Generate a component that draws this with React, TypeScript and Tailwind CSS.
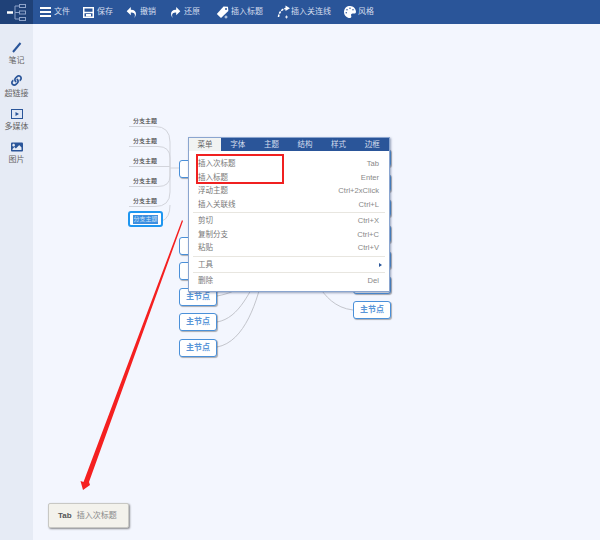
import { ReactNode } from 'react';
import { FaPalette, FaLink, FaImage } from 'react-icons/fa';
import { ImUndo2, ImRedo2 } from 'react-icons/im';

const cjk = "font-['Liberation_Sans','Noto_Sans_CJK_SC',sans-serif]";

function LogoIcon() {
  return (
    <svg width="20" height="19" viewBox="0 0 20 19" fill="none" stroke="#8ea3c9">
      <path d="M0 9.5h6" stroke="#fff" strokeWidth="2.5" />
      <path d="M8 9.5 H12 M8 9.5 V3 H12 M8 9.5 V16 H12" strokeWidth="1" />
      <rect x="12.5" y="1.5" width="6" height="3" />
      <rect x="12.5" y="8" width="6" height="3" />
      <rect x="12.5" y="14.5" width="6" height="3" />
    </svg>
  );
}

function MenuIcon() {
  return (
    <svg width="11" height="10" viewBox="0 0 11 10" fill="#fff">
      <rect width="11" height="2" />
      <rect y="4" width="11" height="2" />
      <rect y="8" width="11" height="2" />
    </svg>
  );
}

function SaveIcon() {
  return (
    <svg width="11" height="11" viewBox="0 0 11 11" fill="none" stroke="#fff">
      <rect x="0.75" y="0.75" width="9.5" height="9.5" strokeWidth="1.5" />
      <path d="M1 5.5h9" strokeWidth="1.5" />
      <rect x="3" y="7" width="5" height="2.5" fill="#fff" stroke="none" />
    </svg>
  );
}

function TagIcon() {
  return (
    <svg width="13" height="13" viewBox="0 0 13 13">
      <path d="M7.5 0.5 L12 0.8 L12.3 5 L5 12 L0.8 8 Z" fill="#fff" />
      <circle cx="10" cy="3" r="1" fill="#2a5599" />
      <path d="M10 9.5v3M8.5 11h3" stroke="#fff" strokeWidth="0.8" />
    </svg>
  );
}

function ArcIcon() {
  return (
    <svg width="14" height="14" viewBox="0 0 14 14" fill="none">
      <path d="M1.5 12 C2 7 5 4 9 3.5" stroke="#fff" strokeWidth="1.5" strokeDasharray="2.5 1" />
      <path d="M8.5 0.5 L13 3.2 L8.5 6 Z" fill="#fff" />
      <path d="M9.5 10.5v3M8 12h3" stroke="#fff" strokeWidth="0.8" />
    </svg>
  );
}

function PenIcon() {
  return (
    <svg width="10" height="11" viewBox="0 0 10 11" fill="none">
      <path d="M1 10 L8.5 1" stroke="#2a5599" strokeWidth="2" />
    </svg>
  );
}

function MediaIcon() {
  return (
    <svg width="12" height="10" viewBox="0 0 12 10">
      <rect x="0.5" y="0.5" width="11" height="9" fill="#dfe7f5" stroke="#2a5599" />
      <path d="M4.5 3 L8 5 L4.5 7 Z" fill="#2a5599" />
    </svg>
  );
}

function ToolItem({ icon, label, className = 'gap-[3px]' }: { icon: ReactNode; label: string; className?: string }) {
  return (
    <div className={`flex items-center ${className}`}>
      {icon}
      <span className="text-[8px] text-[#d5deee]">{label}</span>
    </div>
  );
}

function SideItem({ icon, label }: { icon: ReactNode; label: string }) {
  return (
    <div className="flex h-[33px] flex-col items-center justify-center gap-[2px]">
      <div className="flex h-[13px] items-center text-[#2a5599]">{icon}</div>
      <span className="text-[8px] leading-[10px] text-[#666]">{label}</span>
    </div>
  );
}

function MainNode({ x, y, label }: { x: number; y: number; label?: string }) {
  return (
    <div
      className="absolute flex h-[18px] w-[38px] items-center justify-center rounded-[3px] border-[1.5px] border-[#4a90d9] bg-white text-[8px] font-bold text-[#5a96d8] shadow-[1px_1px_1px_rgba(0,0,0,0.3)]"
      style={{ left: x, top: y }}
    >
      {label}
    </div>
  );
}

function MenuRow({ label, keys }: { label: string; keys?: string }) {
  return (
    <div className="flex h-[13.5px] items-center justify-between pl-[9px] pr-[10px] text-[7.5px] text-[#777]">
      <span>{label}</span>
      {keys && <span className="text-[7.6px] text-[#888]">{keys}</span>}
    </div>
  );
}

function Divider() {
  return <div className="mx-[4px] my-px h-px bg-[#e8e6e0]" />;
}

const branchYs = [120, 140, 160, 180, 200];
const leftNodes = [160, 237, 262];
const leftLabeled = [288, 313, 339];
const rightNodes = [149, 174, 199, 225, 251, 276];

export default function App() {
  return (
    <div className={`flex h-[540px] w-[600px] flex-col overflow-hidden bg-[#f3f6fe] ${cjk}`}>
      <div className="flex h-[24px] shrink-0 bg-[#2a5599]">
        <div className="flex w-[33px] items-center justify-center bg-[#1f4178]">
          <LogoIcon />
        </div>
        <div className="flex items-center gap-[13px] pl-[7px]">
          <ToolItem icon={<MenuIcon />} label="文件" />
          <ToolItem icon={<SaveIcon />} label="保存" />
          <ToolItem icon={<ImUndo2 size={11} color="#fff" />} label="撤销" />
          <ToolItem icon={<ImRedo2 size={11} color="#fff" />} label="还原" className="ml-px gap-[3px]" />
          <ToolItem icon={<TagIcon />} label="插入标题" className="ml-[3px] gap-[2px]" />
          <ToolItem icon={<ArcIcon />} label="插入关连线" className="ml-px" />
          <ToolItem icon={<FaPalette size={12} color="#fff" />} label="风格" className="gap-[2px]" />
        </div>
      </div>

      <div className="flex min-h-0 flex-1">
        <div className="flex w-[33px] shrink-0 flex-col bg-[#e6ebf5] pt-[13px]">
          <SideItem icon={<PenIcon />} label="笔记" />
          <SideItem icon={<FaLink size={11} />} label="超链接" />
          <SideItem icon={<MediaIcon />} label="多媒体" />
          <SideItem icon={<FaImage size={12} />} label="图片" />
        </div>

        {/* free canvas, coordinates below are page coordinates minus the bars */}
        <div className="relative flex-1 -translate-x-[33px] -translate-y-[24px]">
          <svg className="absolute left-0 top-0" width="600" height="540" fill="none" stroke="#d2d4db">
            <path d="M129 126.5 H155 Q170 126.5 170 142 V168 H180" />
            <path d="M129 146.5 H158 Q170 146.5 170 158 V168" />
            <path d="M129 166.5 H170" />
            <path d="M129 186.5 H158 Q170 186.5 170 176 V168" />
            <path d="M129 206.5 H155 Q170 206.5 170 192 V168" />
            <path d="M162 221 Q170 218 170 205" />
            <path d="M217 296 C240 292 250 280 262 270" stroke="#c3c5cc" />
            <path d="M217 322 C240 318 250 290 262 270" stroke="#c3c5cc" />
            <path d="M217 347 C245 342 258 300 264 270" stroke="#c3c5cc" />
            <path d="M353 310 C335 308 325 296 318 285" stroke="#c3c5cc" />
          </svg>

          {branchYs.map((y) => (
            <div key={y} className="absolute left-[133px] text-[6px] font-medium leading-[10px] text-[#444]" style={{ top: y - 4 }}>
              分支主题
            </div>
          ))}
          <div className="absolute left-[128px] top-[211px] flex h-[16px] w-[35px] items-center justify-center rounded-[3px] border-2 border-[#1e96f0] bg-white">
            <span className="bg-[#3d8fe0] text-[6px] leading-[9px] text-[#cfe2f7]">分支主题</span>
          </div>

          {leftNodes.map((y) => (
            <MainNode key={y} x={179} y={y} />
          ))}
          {leftLabeled.map((y) => (
            <MainNode key={y} x={179} y={y} label="主节点" />
          ))}
          {rightNodes.map((y) => (
            <MainNode key={y} x={353} y={y} />
          ))}
          <MainNode x={353} y={301} label="主节点" />

          {/* context menu */}
          <div className="absolute left-[188px] top-[137px] h-[155px] w-[202px] border border-[#8aa5cf] bg-white shadow-[1px_1px_2px_rgba(60,80,120,0.5)]">
            <div className="flex h-[13px] bg-[#2a5599] text-[7.5px] text-[#d5deee]">
              {['菜单', '字体', '主题', '结构', '样式', '边框'].map((t, i) => (
                <div
                  key={t}
                  className={
                    i === 0
                      ? 'flex w-[32px] items-center justify-center bg-[#f1f3f2] text-[#666]'
                      : 'flex flex-1 items-center justify-center'
                  }
                >
                  {t}
                </div>
              ))}
            </div>
            <div className="pt-[6px]">
              <MenuRow label="插入次标题" keys="Tab" />
              <MenuRow label="插入标题" keys="Enter" />
              <MenuRow label="浮动主题" keys="Ctrl+2xClick" />
              <MenuRow label="插入关联线" keys="Ctrl+L" />
              <Divider />
              <MenuRow label="剪切" keys="Ctrl+X" />
              <MenuRow label="复制分支" keys="Ctrl+C" />
              <MenuRow label="粘贴" keys="Ctrl+V" />
              <Divider />
              <div className="relative">
                <MenuRow label="工具" />
                <span className="absolute right-[7px] top-[5px] h-0 w-0 border-y-[2px] border-l-[3px] border-y-transparent border-l-[#2a5599]" />
              </div>
              <Divider />
              <MenuRow label="删除" keys="Del" />
            </div>
          </div>

          {/* annotation */}
          <div className="absolute left-[196px] top-[154px] h-[30px] w-[88px] border-2 border-[#f02020]" />
          <svg className="absolute left-0 top-0" width="600" height="540">
            <path d="M182 220 L183 221 L89 482 L90 485 L83 490 L80.5 481 L83.5 482 Z" fill="#f52020" />
          </svg>

          <div className="absolute left-[48px] top-[503px] flex h-[25px] w-[81px] items-center gap-[5px] rounded-[2px] border border-[#c8c8c4] bg-[#f3f2ec] pl-[9px] text-[8px] text-[#888] shadow-[1px_1px_2px_rgba(0,0,0,0.45)]">
            <span className="font-bold text-[#555]">Tab</span>
            <span>插入次标题</span>
          </div>
        </div>
      </div>
    </div>
  );
}
